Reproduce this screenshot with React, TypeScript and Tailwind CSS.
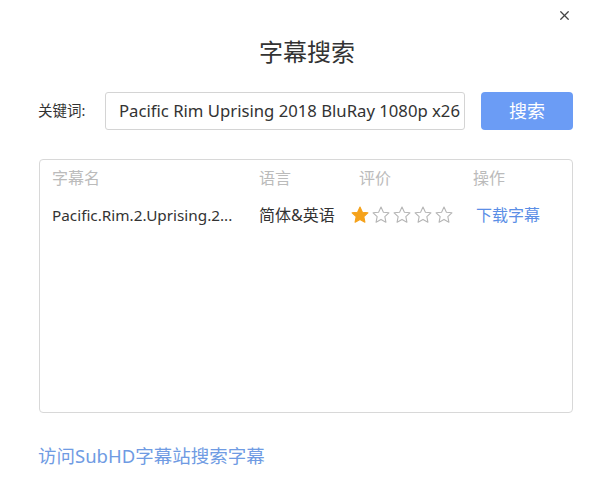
import { X } from "lucide-react";

const font = { fontFamily: '"Noto Sans", "Noto Sans CJK SC", sans-serif' };

function Star({ filled }: { filled: boolean }) {
    return (
        <svg viewBox="0 0 24 24" className="w-[20px] h-[20px]">
            <path
                d="M12 2.5l2.9 6.1 6.6.8-4.9 4.6 1.3 6.6L12 17.3l-5.9 3.3 1.3-6.6-4.9-4.6 6.6-.8z"
                fill={filled ? "#f5a21b" : "none"}
                stroke={filled ? "#f5a21b" : "#b5b5b5"}
                strokeWidth={1.3}
                strokeLinejoin="round"
            />
        </svg>
    );
}

export default function App() {
    return (
        <div className="w-[600px] h-[481px] bg-white relative overflow-hidden" style={font}>
            <button className="absolute top-[8px] right-[28px] text-[#444]">
                <X className="w-[15px] h-[15px]" strokeWidth={2} />
            </button>

            <div className="pt-[33px] flex flex-col">
                <h1 className="text-center text-[24px] leading-[38px] text-[#333] pl-[14px]">字幕搜索</h1>

                <div className="flex items-center mt-[21px] pl-[38px]">
                    <span className="text-[14.5px] text-[#333] w-[67px]">关键词:</span>
                    <div className="w-[360px] h-[38px] border border-[#d4d4d4] rounded-[3px] flex items-center pl-[13px] pr-[4px] overflow-hidden">
                        <span className="whitespace-nowrap text-[16.7px] text-[#333]">
                            Pacific Rim Uprising 2018 BluRay 1080p x26
                        </span>
                    </div>
                    <button className="ml-[16px] w-[92px] h-[38px] rounded-[4px] bg-[#6b9cf5] text-white text-[18px]">
                        搜索
                    </button>
                </div>

                <div className="mx-[39px] mt-[29px] w-[534px] h-[254px] border border-[#d8d8d8] rounded-[4px] px-[12px]">
                    <div className="flex items-center h-[36px] text-[16px] text-[#bbbbbb]">
                        <span className="w-[207px]">字幕名</span>
                        <span className="w-[100px]">语言</span>
                        <span className="w-[114px]">评价</span>
                        <span>操作</span>
                    </div>
                    <div className="flex items-center h-[38px] text-[16px] text-[#333]">
                        <span className="w-[207px] whitespace-nowrap text-[15.3px]">Pacific.Rim.2.Uprising.2...</span>
                        <span className="w-[91px]">简体&amp;英语</span>
                        <span className="w-[126px] flex items-center gap-[1px]">
                            <Star filled />
                            <Star filled={false} />
                            <Star filled={false} />
                            <Star filled={false} />
                            <Star filled={false} />
                        </span>
                        <a className="text-[#5b8ee6]">下载字幕</a>
                    </div>
                </div>

                <a className="mt-[29px] ml-[38px] text-[18.5px] text-[#6f9be3]">访问SubHD字幕站搜索字幕</a>
            </div>
        </div>
    );
}
